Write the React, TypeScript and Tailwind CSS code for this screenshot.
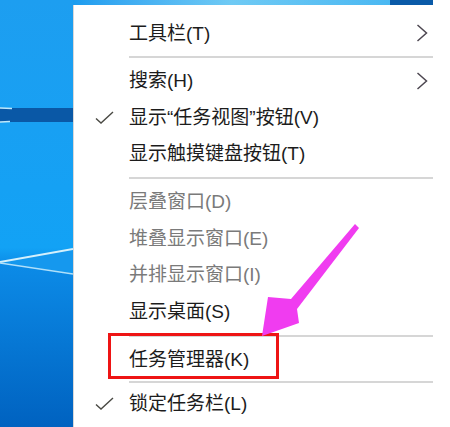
import React from "react";

type Item =
  | { kind: "item"; label: string; checked?: boolean; arrow?: boolean; disabled?: boolean; h: string }
  | { kind: "sep"; h: string };

const Check = () => (
  <svg width="19" height="13" viewBox="0 0 19 13" className="block">
    <path d="M1 7.5 L6 12 L18 1" fill="none" stroke="#4a4a44" strokeWidth="1.4" />
  </svg>
);

const Chevron = () => (
  <svg width="12" height="18" viewBox="0 0 12 18" className="block">
    <path d="M1.5 1 L10.5 9 L1.5 17" fill="none" stroke="#4c4650" strokeWidth="1.5" />
  </svg>
);

const Row = ({ label, checked, arrow, disabled, h }: { label: string; checked?: boolean; arrow?: boolean; disabled?: boolean; h: string }) => (
  <div className={`flex items-center ${h}`}>
    <div className="w-[55px] h-full flex items-center pl-[21px]">{checked ? <Check /> : null}</div>
    <div className={`flex-1 text-[19px] leading-none whitespace-nowrap ${disabled ? "text-[#7a7a7a]" : "text-[#1c1c1c]"}`}>
      {label}
    </div>
    <div className="w-[12px] mr-[5px] flex items-center">{arrow ? <Chevron /> : null}</div>
  </div>
);

const Sep = ({ h }: { h: string }) => (
  <div className={`flex items-center ${h}`}>
    <div className="ml-[55px] flex-1 h-[2px] bg-[#d6d6d6]" />
  </div>
);

const items: Item[] = [
  { kind: "item", label: "工具栏(T)", arrow: true, h: "h-[36.5px]" },
  { kind: "sep", h: "h-[11px]" },
  { kind: "item", label: "搜索(H)", arrow: true, h: "h-[36.5px]" },
  { kind: "item", label: "显示“任务视图”按钮(V)", checked: true, h: "h-[36.5px]" },
  { kind: "item", label: "显示触摸键盘按钮(T)", h: "h-[36.5px]" },
  { kind: "sep", h: "h-[11.5px]" },
  { kind: "item", label: "层叠窗口(D)", disabled: true, h: "h-[36.5px]" },
  { kind: "item", label: "堆叠显示窗口(E)", disabled: true, h: "h-[36.5px]" },
  { kind: "item", label: "并排显示窗口(I)", disabled: true, h: "h-[36.5px]" },
  { kind: "item", label: "显示桌面(S)", h: "h-[36.5px]" },
  { kind: "sep", h: "h-[12px]" },
  { kind: "item", label: "任务管理器(K)", h: "h-[36.5px]" },
  { kind: "sep", h: "h-[7px]" },
  { kind: "item", label: "锁定任务栏(L)", checked: true, h: "h-[36.5px]" },
];

const Wallpaper = () => (
  <svg width="73" height="427" viewBox="0 0 73 427" className="block">
    <defs>
      <linearGradient id="wp" x1="0" y1="0" x2="0" y2="1">
        <stop offset="0" stopColor="#1d9ef0" />
        <stop offset="0.3" stopColor="#18a0f3" />
        <stop offset="0.58" stopColor="#12a2f5" />
        <stop offset="0.62" stopColor="#0c8be7" />
        <stop offset="1" stopColor="#0062c0" />
      </linearGradient>
    </defs>
    <rect x="0" y="0" width="73" height="427" fill="url(#wp)" />
    <rect x="0" y="108" width="73" height="14" fill="#0a58a6" />
    <line x1="0" y1="108" x2="12" y2="108.5" stroke="#bfe8fb" strokeWidth="1.5" />
    <line x1="0" y1="122" x2="10" y2="121.5" stroke="#bfe8fb" strokeWidth="1.5" />
    <polygon points="0,262 73,249 73,274" fill="#1598ee" />
    <line x1="0" y1="262" x2="73" y2="249" stroke="#d4f0fc" strokeWidth="2" />
    <line x1="0" y1="263" x2="73" y2="274" stroke="#b0e0fa" strokeWidth="1.5" />
  </svg>
);

const PinkArrow = () => (
  <svg width="450" height="427" viewBox="0 0 450 427" className="absolute left-0 top-0 pointer-events-none">
    <polygon
      points="355,224 291,299 268,297 262,336 299,323 297,309 359,228"
      fill="#f03cf0"
    />
  </svg>
);

export default function App() {
  return (
    <div
      className="relative w-[450px] h-[427px] overflow-hidden bg-white flex"
      style={{ fontFamily: '"Liberation Sans", "Noto Sans CJK SC", sans-serif' }}
    >
      <div className="w-[73px] h-full shrink-0">
        <Wallpaper />
      </div>
      <div className="flex flex-col w-[360px]">
        <div className="h-[5px] flex">
          <div className="flex-1 bg-gradient-to-r from-[#1a9cef] via-[#6fcaf4] to-[#4ab8f2]" />
          <div className="w-[43px] bg-[#0a5aa8]" />
        </div>
        <div className="flex-1 flex flex-col pt-[10px] border-l border-[#d8d8d8]">
          {items.map((it, i) =>
            it.kind === "sep" ? (
              <Sep key={i} h={it.h} />
            ) : (
              <Row key={i} label={it.label} checked={it.checked} arrow={it.arrow} disabled={it.disabled} h={it.h} />
            )
          )}
        </div>
      </div>
      <div className="absolute left-[108px] top-[333px] w-[171px] h-[46px] border-[3px] border-[#ee1414]" />
      <PinkArrow />
    </div>
  );
}
